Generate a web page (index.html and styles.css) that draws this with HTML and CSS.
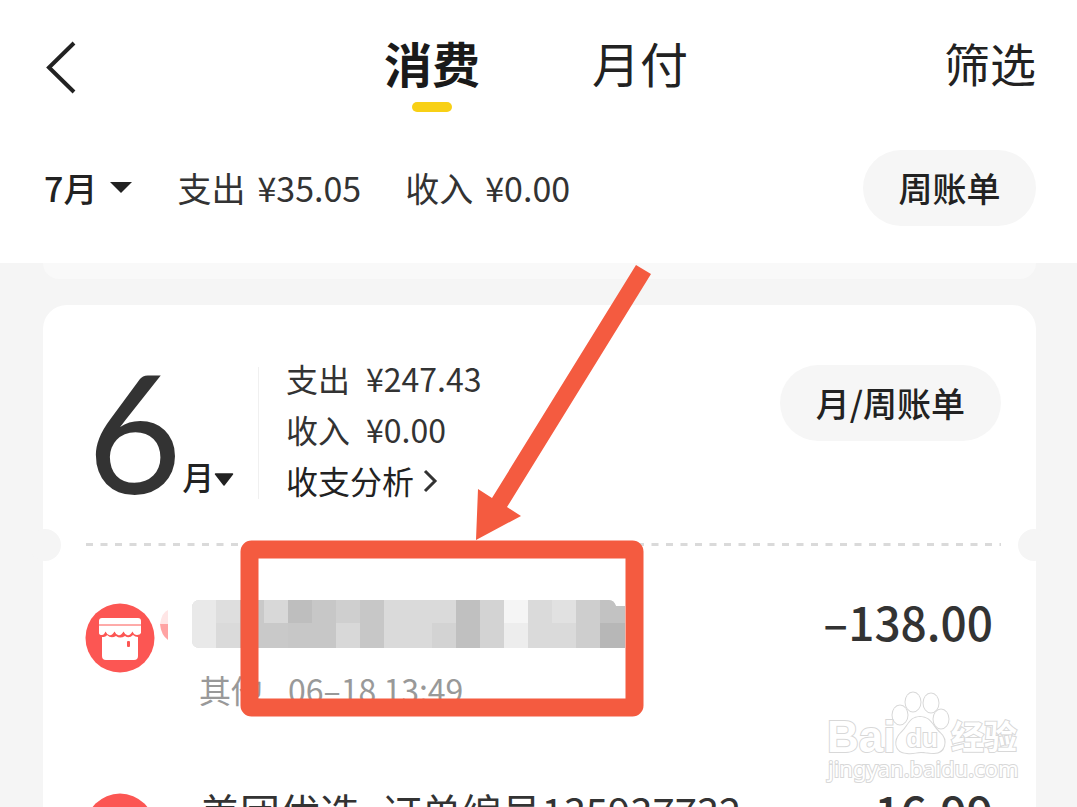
FILE: index.html
```html
<!DOCTYPE html>
<html lang="zh-CN">
<head>
<meta charset="utf-8">
<meta name="viewport" content="width=device-width, initial-scale=1">
<title>账单</title>
<link rel="stylesheet" href="styles.css">
</head>
<body>
<div class="screen">
  <header class="header">
    <div class="nav">
      <button class="back" aria-label="返回">
        <svg width="36" height="56" viewBox="0 0 36 56"><path d="M30 4 5 28.500 30 53" fill="none" stroke="#222" stroke-width="4"/></svg>
      </button>
      <nav class="tabs">
        <button class="tab tab-active">消费</button>
        <button class="tab">月付</button>
      </nav>
      <button class="filter">筛选</button>
    </div>
    <div class="summary">
      <button class="month">7月
        <svg width="24" height="12" viewBox="0 0 24 12"><path d="M1 0H23L12 11Z" fill="#222"/></svg>
      </button>
      <span class="total"><span>支出</span><span>¥35.05</span></span>
      <span class="total"><span>收入</span><span>¥0.00</span></span>
      <button class="pill pill-week">周账单</button>
    </div>
  </header>
  <main class="list">
    <div class="card card-end"></div>
    <section class="card bill">
      <div class="bill-head">
        <button class="bill-month"><span class="number">6</span><span class="unit">月</span>
          <svg class="caret" width="20" height="14" viewBox="0 0 20 14"><path d="M1.500 1H18.500L10 12Z" fill="#222" stroke="#222" stroke-width="1.500" stroke-linejoin="round"/></svg>
        </button>
        <div class="figures">
          <p class="figure"><span>支出</span><span>¥247.43</span></p>
          <p class="figure"><span>收入</span><span>¥0.00</span></p>
          <a class="figure analysis" href="#">收支分析
            <svg width="16" height="24" viewBox="0 0 16 24"><path d="M3 2 13 12 3 22" fill="none" stroke="#333" stroke-width="3"/></svg>
          </a>
        </div>
        <button class="pill pill-month">月/周账单</button>
      </div>
      <div class="tear">
        <svg width="100%" height="3"><line x1="0" y1="1.500" x2="100%" y2="1.500" stroke="#dadada" stroke-width="3" stroke-dasharray="7 7.500"/></svg>
      </div>
      <article class="entry">
        <svg class="shop" viewBox="0 0 70 70"><use href="#shop"/></svg>
        <div class="entry-text">
          <svg class="mosaic" viewBox="0 0 465 50" role="img" aria-label="已遮挡">
            <defs><clipPath id="mask"><path d="M40 1H449Q454 1 456 7H465V49H40Q32 49 32 41V9Q32 1 40 1Z"/></clipPath></defs>
            <path d="M0 25H8V41Q1 36 0 25Z" fill="#ffa3a3"/><path d="M0 25Q2 13 8 11V25Z" fill="#ffe6e6"/>
            <g clip-path="url(#mask)" shape-rendering="crispEdges">
              <path fill="#dadada" d="M32 0H465V50H32Z"/>
              <path fill="#e9e9e9" d="M32 0H56V50H32Z"/>
              <path fill="#dedede" d="M56 0H80V24H56Z"/>
              <path fill="#c9c9c9" d="M80 0H104V50H80ZM104 24H128V50H104Z"/>
              <path fill="#d8d8d8" d="M104 0H128V24H104ZM176 24H200V50H176Z"/>
              <path fill="#bebebe" d="M128 0H152V24H128Z"/>
              <path fill="#c7c7c7" d="M152 0H176V24H152ZM128 24H176V50H128ZM200 0H224V50H200Z"/>
              <path fill="#cfcfcf" d="M176 0H200V24H176Z"/>
              <path fill="#d3d3d3" d="M272 24H296V50H272ZM320 0H344V50H320Z"/>
              <path fill="#c0c0c0" d="M296 0H320V50H296Z"/>
              <path fill="#f5f5f5" d="M344 0H368V24H344Z"/>
              <path fill="#ededed" d="M344 24H368V50H344Z"/>
              <path fill="#e1e1e1" d="M392 0H416V24H392Z"/>
              <path fill="#cecece" d="M416 0H440V50H416Z"/>
              <path fill="#c2c2c2" d="M440 0H465V24H440Z"/>
              <path fill="#b7b7b7" d="M440 24H465V50H440Z"/>
            </g>
          </svg>
          <p class="meta"><span>其他</span><time>06–18 13:49</time></p>
        </div>
        <strong class="amount">–138.00</strong>
      </article>
      <article class="entry">
        <svg class="shop" viewBox="0 0 70 70"><use href="#shop"/></svg>
        <div class="entry-text"><p class="title">美团优选–订单编号135937732</p></div>
        <strong class="amount">–16.99</strong>
      </article>
    </section>
  </main>

  <svg class="markup" width="404" height="454" viewBox="0 0 404 454" aria-hidden="true">
    <rect x="9.500" y="285.500" width="385" height="158" rx="2" fill="none" stroke="#f45b40" stroke-width="18" stroke-linejoin="round"/>
    <path d="M396 1 411 10 267 243 281 252 236 276 238 225 252 234Z" fill="#f45b40"/>
  </svg>

  <svg class="watermark" width="200" height="100" viewBox="0 0 200 100" role="img" aria-label="Baidu 经验">
    <g fill="#fff" stroke="#d8d8d8" stroke-width="2" paint-order="stroke">
      <ellipse cx="74" cy="25" rx="7.500" ry="9.500"/><ellipse cx="87" cy="12" rx="7.500" ry="9.500"/><ellipse cx="105" cy="13" rx="7.500" ry="9.500"/><ellipse cx="115" cy="29" rx="7.500" ry="9.500"/>
      <path d="M94 27C105 27 106 36 114 43C122 50 119 63 108 63C100 63 99 62 95 62C90 62 87 64 81 63C68 62 68 50 75 43C83 36 83 27 94 27Z"/>
      <text class="wm-brand" x="1" y="62">Bai</text>
      <text class="wm-du" x="80" y="57">du</text>
      <text class="wm-cn" x="125" y="59">经验</text>
      <text class="wm-url" x="2" y="87">jingyan.baidu.com</text>
    </g>
  </svg>
</div>

<svg class="symbols" width="0" height="0" aria-hidden="true">
  <symbol id="shop" viewBox="0 0 70 70">
    <circle cx="35" cy="35" r="34.500" fill="#fc5653"/>
    <path d="M17 15H53Q56 15 56 18V30Q55 32 52 32Q49 32 47.500 28.500Q45 33 42 32Q40 31.500 38.500 28.500Q36 33 33 32Q31 31.500 29.500 28.500Q27 33 24 32Q22 31.500 20.500 28.500Q19 32 17 32Q14 32 14 30V18Q14 15 17 15Z" fill="#fff"/>
    <path d="M14 22H56" stroke="#fc5653" stroke-width="1"/>
    <path d="M17 34Q21 34 22 32Q26 36 31 33Q35 36 40 33Q44 36 48 32Q50 34 53 34V53Q53 57 49 57H21Q17 57 17 53Z" fill="#fff"/>
    <rect x="42" y="38" width="3" height="6" rx="1" fill="#fc5653"/>
  </symbol>
</svg>
</body>
</html>
```
FILE: styles.css
```css
* { box-sizing: border-box; }
body { margin: 0; background: #f5f5f5; color: #222; font-family: "Noto Sans CJK SC", sans-serif; }
p { margin: 0; }
button { border: 0; padding: 0; background: none; color: inherit; font: inherit; }
a { color: inherit; text-decoration: none; }
svg { display: block; flex: none; }

.screen { position: relative; height: 100vh; overflow: hidden; }

.header { display: flex; flex-direction: column; padding: 26px 41px 37px 44px; background: #fff; }
.nav { display: grid; grid-template-columns: 1fr auto 1fr; align-items: start; }
.back { justify-self: start; padding-top: 13px; }
.tabs { display: flex; gap: 112px; padding-right: 8px; }
.tab { position: relative; font-size: 48px; line-height: 72px; }
.tab-active { font-weight: 700; color: #1a1a1a; }
.tab-active::after { content: ""; position: absolute; left: 28px; right: 28px; bottom: -14px; height: 10px; border-radius: 5px; background: #f8d015; }
.filter { justify-self: end; font-size: 46px; line-height: 72px; }

.summary { display: flex; align-items: center; gap: 44px; margin-top: 52px; font-size: 34px; line-height: 76px; }
.month { display: flex; align-items: center; gap: 12px; font-weight: 500; }
.total { display: flex; gap: 12px; color: #333; }
.pill { height: 76px; border-radius: 38px; background: #f6f6f6; font-size: 34px; line-height: 72px; font-weight: 500; color: #222; }
.pill-week { width: 173px; margin-left: auto; }
.pill-month { width: 221px; margin-left: auto; }

.list { display: flex; flex-direction: column; gap: 26px; padding: 0 41px 0 43px; }
.card { background: #fff; border-radius: 24px; }
.card-end { height: 16px; border-radius: 0 0 16px 16px; background: #f9f9f9; }
.bill-head { display: flex; align-items: flex-start; height: 228px; padding: 48px 35px 0 44px; }
.bill-head .pill { margin-top: 12px; }
.bill-month { display: flex; align-items: flex-end; width: 172px; height: 132px; margin-top: 14px; border-right: 1px solid #f0f0f0; }
.number { font-family: Lato, sans-serif; font-size: 164px; line-height: 136px; color: #333; }
.unit { font-size: 32px; line-height: 46px; font-weight: 500; }
.caret { margin-bottom: 12px; }
.figures { padding-left: 27px; font-size: 32px; line-height: 51px; color: #333; }
.figure { display: flex; align-items: center; gap: 16px; }
.analysis { gap: 8px; color: #222; }

.tear { position: relative; padding: 10px 35px 10px 43px; }
.tear::before, .tear::after { content: ""; position: absolute; top: -4px; width: 32px; height: 32px; border-radius: 50%; background: #f5f5f5; }
.tear::before { left: -14px; }
.tear::after { right: -14px; }

.entry { display: flex; align-items: flex-start; height: 190px; padding: 47px 43px 0 42px; }
.shop { width: 70px; height: 70px; }
.entry-text { padding-left: 5px; }
.mosaic { width: 465px; height: 50px; margin-top: -4px; }
.meta { display: flex; gap: 25px; padding: 16px 0 0 39px; font-size: 32px; line-height: 48px; color: #999; }
.title { padding-left: 40px; font-size: 40px; line-height: 60px; margin-top: -12px; color: #333; }
.amount { margin-left: auto; font-size: 46px; line-height: 36px; font-weight: 500; color: #333; }

.markup { position: absolute; left: 240px; top: 264px; overflow: visible; }
.watermark { position: absolute; right: 51px; bottom: 17px; overflow: visible; }
.wm-brand { font: 700 44px "Liberation Sans", sans-serif; }
.wm-du { font: 700 26px "Liberation Sans", sans-serif; }
.wm-cn { font: 700 33px "Noto Sans CJK SC", sans-serif; }
.wm-url { font: 400 22px "Noto Sans", sans-serif; }
.symbols { position: absolute; }
```
